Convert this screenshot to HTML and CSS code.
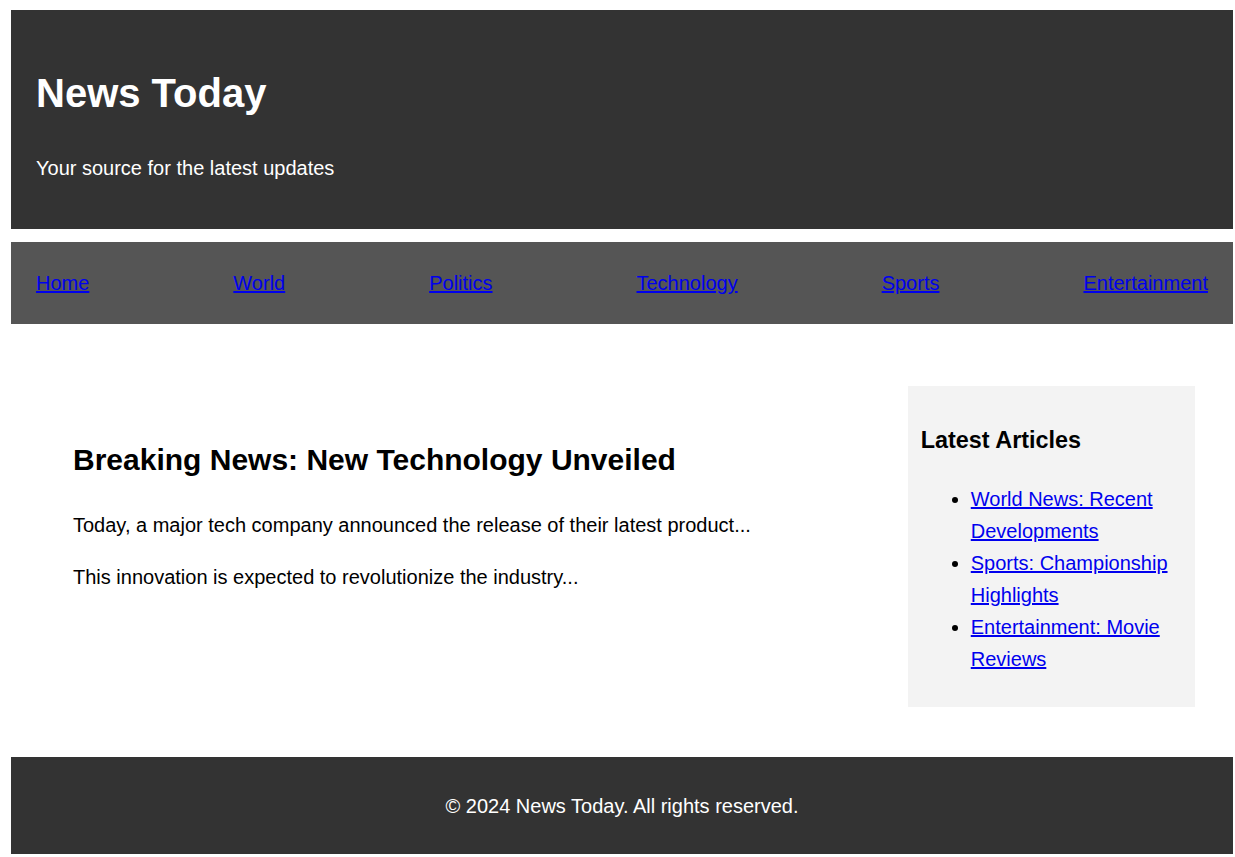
FILE: index.html
```html
<!DOCTYPE html>
<html lang="en">
<head>
<meta charset="utf-8">
<title>News Today</title>
<link rel="stylesheet" href="styles.css">
</head>
<body>
<header class="site-header">
  <h1 class="site-title">News Today</h1>
  <p class="site-tagline">Your source for the latest updates</p>
</header>
<nav class="site-nav">
  <ul class="nav-list">
    <li><a href="#">Home</a></li>
    <li><a href="#">World</a></li>
    <li><a href="#">Politics</a></li>
    <li><a href="#">Technology</a></li>
    <li><a href="#">Sports</a></li>
    <li><a href="#">Entertainment</a></li>
  </ul>
</nav>
<main class="content">
  <article class="article">
    <h2 class="article-title">Breaking News: New Technology Unveiled</h2>
    <p class="article-text">Today, a major tech company announced the release of their latest product...</p>
    <p class="article-text">This innovation is expected to revolutionize the industry...</p>
  </article>
  <aside class="sidebar">
    <h3 class="sidebar-title">Latest Articles</h3>
    <ul class="sidebar-list">
      <li><a href="#">World News: Recent Developments</a></li>
      <li><a href="#">Sports: Championship Highlights</a></li>
      <li><a href="#">Entertainment: Movie Reviews</a></li>
    </ul>
  </aside>
</main>
<footer class="site-footer">
  <p class="footer-text">&copy; 2024 News Today. All rights reserved.</p>
</footer>
</body>
</html>
```
FILE: styles.css
```css
html, body {
  background: #ffffff;
}
body {
  margin: 10px 2px 10px 11px;
  font-family: "Liberation Sans", Arial, sans-serif;
  font-size: 20px;
  line-height: 1.6;
  color: #000000;
}
a {
  color: #0000ee;
  text-decoration: underline;
}
.site-header {
  background: #333333;
  color: #ffffff;
  padding: 25px;
}
.site-title {
  font-size: 40px;
  font-weight: bold;
  margin: 26.2px 0 26.8px;
}
.site-tagline {
  margin: 20px 0;
}
.site-nav {
  background: #555555;
  margin-top: 13px;
  padding: 25px;
}
.nav-list {
  list-style: none;
  margin: 0;
  padding: 0;
  display: flex;
  justify-content: space-between;
}
.content {
  display: grid;
  grid-template-columns: 3fr 1fr;
  align-items: start;
  padding: 62px 38px 50px 37px;
}
.article {
  padding: 25px;
}
.article-title {
  font-size: 30px;
  font-weight: bold;
  margin: 24.9px 0;
}
.article-text {
  margin: 20px 0;
}
.sidebar {
  background: #f3f3f3;
  padding: 12.5px;
}
.sidebar-title {
  font-size: 23.4px;
  font-weight: bold;
  margin: 23.4px 0;
}
.sidebar-list {
  margin: 20px 0;
  padding-left: 50px;
}
.site-footer {
  background: #333333;
  color: #ffffff;
  text-align: center;
  padding: 33px 25px 32px;
}
.footer-text {
  margin: 0;
}
```
